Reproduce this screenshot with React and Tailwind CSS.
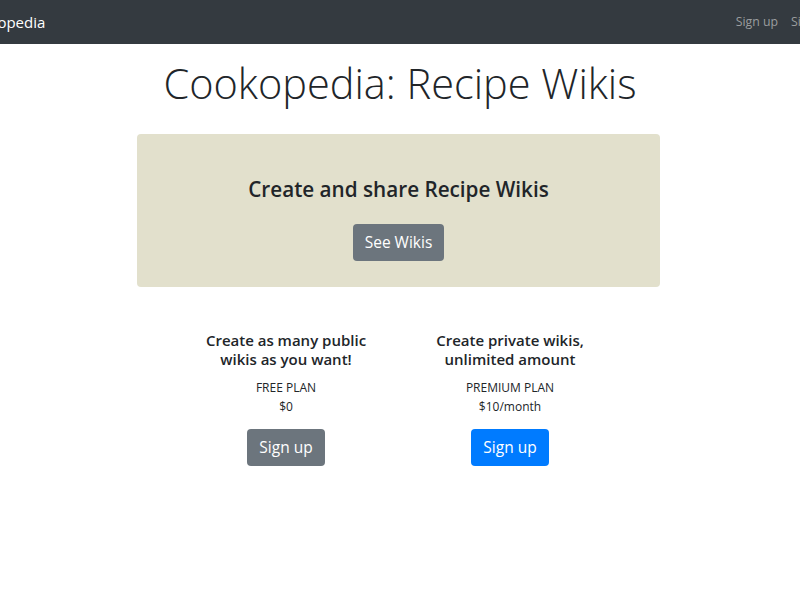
import React from 'react';

const font = { fontFamily: '"Open Sans", "Noto Sans", sans-serif' };

function PlanCard({ title, plan, price, primary }) {
  return (
    <div className="w-[200px] flex flex-col items-center text-center">
      <h5 className="text-[15px] leading-[19px] font-semibold text-[#212529]">{title}</h5>
      <p className="mt-[9px] text-[12px] leading-[19px] text-[#212529]">{plan}</p>
      <p className="text-[12px] leading-[19px] text-[#212529]">{price}</p>
      <button
        className={
          'mt-[13px] h-[37px] px-[12px] rounded-[4px] text-[15.5px] text-white ' +
          (primary ? 'bg-[#007bff]' : 'bg-[#6c757d]')
        }
      >
        Sign up
      </button>
    </div>
  );
}

export default function App() {
  return (
    <div className="w-[800px] h-[600px] bg-white overflow-hidden" style={font}>
      {/* Navbar */}
      <nav className="h-[44px] bg-[#343a40] flex items-center justify-between">
        <span className="-ml-[38px] text-[15px] text-white whitespace-nowrap">Cookopedia</span>
        <div className="flex items-center gap-[13px] -mr-[29px] text-[12.3px] text-[#9b9d9f] whitespace-nowrap">
          <span>Sign up</span>
          <span>Sign in</span>
        </div>
      </nav>

      {/* Title */}
      <h1 className="mt-[10px] text-center text-[41.5px] leading-[58px] font-light text-[#212529]">
        Cookopedia: Recipe Wikis
      </h1>

      {/* Jumbotron */}
      <div className="mt-[22px] flex justify-center pr-[3px]">
        <div className="w-[523px] h-[153px] bg-[#e2e0cc] rounded-[4px] flex flex-col items-center pt-[42px]">
          <h3 className="text-[20.7px] leading-[27px] font-semibold text-[#212529]">
            Create and share Recipe Wikis
          </h3>
          <button className="mt-[21px] h-[37px] px-[12px] rounded-[4px] bg-[#6c757d] text-[15.5px] text-white">
            See Wikis
          </button>
        </div>
      </div>

      {/* Plans */}
      <div className="mt-[44px] flex justify-center gap-[24px] pr-[4px]">
        <PlanCard
          title={<>Create as many public<br />wikis as you want!</>}
          plan="FREE PLAN"
          price="$0"
        />
        <PlanCard
          title={<>Create private wikis,<br />unlimited amount</>}
          plan="PREMIUM PLAN"
          price="$10/month"
          primary
        />
      </div>
    </div>
  );
}
